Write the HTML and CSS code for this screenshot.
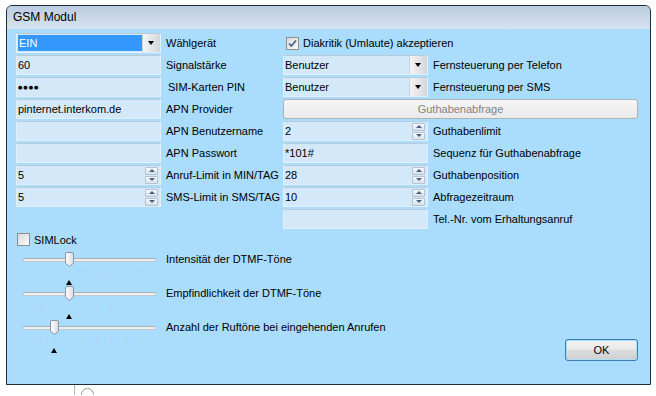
FILE: index.html
```html
<!DOCTYPE html>
<html lang="de">
<head>
  <meta charset="UTF-8">
  <title>GSM Modul</title>
  <link rel="stylesheet" href="styles.css">
</head>
<body>
  <div class="window">
    <div class="titlebar">GSM Modul</div>
    <div class="client">
      <div class="form">
        <!-- Zeile 1 -->
        <div class="combo"><span class="combo-text selected">EIN</span><span class="combo-btn"></span></div>
        <span class="lbl">Wählgerät</span>
        <label class="check wide">
          <span class="box"><svg width="11" height="11" viewBox="0 0 11 11"><path d="M2 5.5 L4.3 8 L9 2.5" fill="none" stroke="#4a6283" stroke-width="1.8"/></svg></span>
          Diakritik (Umlaute) akzeptieren
        </label>

        <div class="edit"><span class="val">60</span></div>
        <span class="lbl">Signalstärke</span>
        <div class="combo"><span class="combo-text">Benutzer</span><span class="combo-btn"></span></div>
        <span class="lbl">Fernsteuerung per Telefon</span>

        <div class="edit"><span class="val dots">●●●●</span></div>
        <span class="lbl indent">SIM-Karten PIN</span>
        <div class="combo"><span class="combo-text">Benutzer</span><span class="combo-btn"></span></div>
        <span class="lbl">Fernsteuerung per SMS</span>

        <div class="edit"><span class="val">pinternet.interkom.de</span></div>
        <span class="lbl">APN Provider</span>
        <button class="btn-disabled wide" disabled>Guthabenabfrage</button>

        <div class="edit"></div>
        <span class="lbl">APN Benutzername</span>
        <div class="edit"><span class="val">2</span><span class="spin"><span class="up"></span><span class="down"></span></span></div>
        <span class="lbl">Guthabenlimit</span>

        <div class="edit"></div>
        <span class="lbl">APN Passwort</span>
        <div class="edit"><span class="val">*101#</span></div>
        <span class="lbl">Sequenz für Guthabenabfrage</span>

        <div class="edit"><span class="val">5</span><span class="spin"><span class="up"></span><span class="down"></span></span></div>
        <span class="lbl">Anruf-Limit in MIN/TAG</span>
        <div class="edit"><span class="val">28</span><span class="spin"><span class="up"></span><span class="down"></span></span></div>
        <span class="lbl">Guthabenposition</span>

        <div class="edit"><span class="val">5</span><span class="spin"><span class="up"></span><span class="down"></span></span></div>
        <span class="lbl">SMS-Limit in SMS/TAG</span>
        <div class="edit"><span class="val">10</span><span class="spin"><span class="up"></span><span class="down"></span></span></div>
        <span class="lbl">Abfragezeitraum</span>

        <div class="edit col3"></div>
        <span class="lbl">Tel.-Nr. vom Erhaltungsanruf</span>
      </div>

      <label class="check simlock"><span class="box"></span>SIMLock</label>

      <div class="lower">
        <div class="sliders">
          <div class="slider-row">
            <div class="trackbar" style="--v: 3">
              <span class="track"></span>
              <span class="ticks"><i></i><i></i><i></i><i></i><i></i><i></i><i></i><i></i><i></i><i></i></span>
              <svg class="thumb" width="9" height="15" viewBox="0 0 9 15"><path d="M0.5 2 Q0.5 0.5 2 0.5 H7 Q8.5 0.5 8.5 2 V11 L4.5 14.5 L0.5 11 Z" fill="url(#tg)" stroke="#8a96a2"/><defs><linearGradient id="tg" x1="0" x2="1"><stop offset="0" stop-color="#ffffff"/><stop offset="1" stop-color="#d9dde2"/></linearGradient></defs></svg>
              <span class="marker"></span>
            </div>
            <span class="slider-lbl">Intensität der DTMF-Töne</span>
          </div>
          <div class="slider-row">
            <div class="trackbar" style="--v: 3">
              <span class="track"></span>
              <span class="ticks"><i></i><i></i><i></i><i></i><i></i><i></i><i></i><i></i><i></i><i></i></span>
              <svg class="thumb" width="9" height="15" viewBox="0 0 9 15"><path d="M0.5 2 Q0.5 0.5 2 0.5 H7 Q8.5 0.5 8.5 2 V11 L4.5 14.5 L0.5 11 Z" fill="url(#tg)" stroke="#8a96a2"/></svg>
              <span class="marker"></span>
            </div>
            <span class="slider-lbl">Empfindlichkeit der DTMF-Töne</span>
          </div>
          <div class="slider-row">
            <div class="trackbar" style="--v: 2">
              <span class="track"></span>
              <span class="ticks"><i></i><i></i><i></i><i></i><i></i><i></i><i></i><i></i><i></i><i></i></span>
              <svg class="thumb" width="9" height="15" viewBox="0 0 9 15"><path d="M0.5 2 Q0.5 0.5 2 0.5 H7 Q8.5 0.5 8.5 2 V11 L4.5 14.5 L0.5 11 Z" fill="url(#tg)" stroke="#8a96a2"/></svg>
              <span class="marker"></span>
            </div>
            <span class="slider-lbl">Anzahl der Ruftöne bei eingehenden Anrufen</span>
          </div>
        </div>
        <button class="btn-ok">OK</button>
      </div>
    </div>
  </div>
  <div class="behind"><span class="radio"></span></div>
</body>
</html>
```

FILE: styles.css
```css
body {
  margin: 0;
  background-color: #ffffff;
  font-family: "Liberation Sans", Arial, sans-serif;
  font-size: 11px;
  color: #000;
}
.window {
  margin: 5px 0 0 6px;
  width: 645px;
  box-sizing: border-box;
  border: 1px solid #1e2d3a;
  border-radius: 6px 6px 0 0;
  background-color: #aadcfd;
  overflow: hidden;
}
.titlebar {
  height: 23px;
  line-height: 23px;
  padding-left: 6px;
  font-size: 12px;
  background: linear-gradient(#bccde0, #d6e3f0);
}
.client {
  padding: 4px 12px 23px 9px;
}
.form {
  display: grid;
  grid-template-columns: 145px 112px 145px 205px;
  grid-auto-rows: 20px;
  column-gap: 5px;
  row-gap: 2px;
}
.lbl {
  display: flex;
  align-items: center;
  white-space: nowrap;
}
.lbl.indent {
  padding-left: 2px;
}
.wide {
  grid-column: 3 / span 2;
}
.col3 {
  grid-column: 3;
}

/* Eingabefelder */
.edit {
  display: flex;
  align-items: center;
  box-sizing: border-box;
  border: 1px solid #e2f0fb;
  border-top-color: #b9cad8;
  background-color: #d3e9fa;
}
.edit .val {
  flex: 1;
  padding-left: 1px;
}
.dots {
  font-family: "DejaVu Sans", sans-serif;
  font-size: 5px;
  letter-spacing: 1px;
}
.spin {
  display: flex;
  flex-direction: column;
  gap: 1px;
  width: 13px;
  margin-right: 2px;
}
.spin span {
  position: relative;
  height: 6px;
  border: 1px solid #b3c3d2;
  border-radius: 1px;
  background: linear-gradient(#f7f9fb, #d8e1e9);
}
.spin span:after {
  content: "";
  position: absolute;
  left: 3px;
  top: 1.5px;
  border-left: 3px solid transparent;
  border-right: 3px solid transparent;
}
.spin .up:after {
  border-bottom: 3px solid #4b5f7e;
}
.spin .down:after {
  border-top: 3px solid #4b5f7e;
}

/* Auswahllisten */
.combo {
  display: flex;
  box-sizing: border-box;
  border: 1px solid #e2f0fb;
  border-top-color: #b9cad8;
  background-color: #d3e9fa;
}
.combo-text {
  flex: 1;
  display: flex;
  align-items: center;
  padding-left: 1px;
}
.combo-text.selected {
  margin: 1px 0 1px 1px;
  background-color: #3399ff;
  color: #fff;
}
.combo-btn {
  position: relative;
  width: 17px;
  border-left: 1px solid #c9d3dc;
  background: linear-gradient(to right, #f4f4f4, #d4d7da);
}
.combo-btn:after {
  content: "";
  position: absolute;
  left: 5px;
  top: 7px;
  border-left: 3.5px solid transparent;
  border-right: 3.5px solid transparent;
  border-top: 4px solid #000;
}

/* Kontrollkästchen */
.check {
  display: flex;
  align-items: center;
  gap: 4px;
  padding-left: 3px;
}
.box {
  display: flex;
  align-items: center;
  justify-content: center;
  width: 13px;
  height: 13px;
  box-sizing: border-box;
  border: 1px solid #8e8f8f;
  background: linear-gradient(135deg, #d6d9dc, #fbfbfb);
}
.simlock {
  margin-top: 4px;
  padding-left: 1px;
  height: 13px;
}

/* Buttons */
.btn-disabled {
  font: inherit;
  color: #838383;
  border: 1px solid #adb2b5;
  border-radius: 3px;
  background: linear-gradient(#f6f6f6, #eaeaea);
}
.btn-ok {
  width: 73px;
  height: 22px;
  font: inherit;
  color: #000;
  border: 1px solid #3c7fb1;
  border-radius: 3px;
  background: linear-gradient(#f2f2f2 0%, #ebebeb 45%, #dddddd 50%, #cfcfcf 100%);
  box-shadow: inset 0 0 0 1px #a9dcf5;
}

/* Schieberegler */
.lower {
  display: flex;
  justify-content: space-between;
  align-items: flex-end;
  margin-top: 6px;
}
.sliders {
  padding-bottom: 7px;
}
.slider-row {
  display: grid;
  grid-template-columns: 145px auto;
  column-gap: 5px;
  height: 34px;
}
.trackbar {
  position: relative;
  height: 34px;
}
.track {
  position: absolute;
  left: 7px;
  top: 6px;
  width: 131px;
  height: 2px;
  border: 1px solid #c3c8cd;
  border-top-color: #a9b0b7;
  background-color: #eceeef;
}
.ticks {
  position: absolute;
  left: 10px;
  top: 19px;
  width: 129px;
  display: flex;
  justify-content: space-between;
}
.ticks i {
  width: 1px;
  height: 3px;
  background-color: #bfc8d0;
}
.thumb {
  position: absolute;
  top: 0;
  left: calc(10px + var(--v) * 14.2px - 4px);
}
.marker {
  position: absolute;
  top: 28px;
  left: calc(10px + var(--v) * 14.2px - 3px);
  border-left: 3.5px solid transparent;
  border-right: 3.5px solid transparent;
  border-bottom: 5px solid #000;
}
.slider-lbl {
  padding-top: 1px;
  white-space: nowrap;
}

/* Fenster dahinter */
.behind {
  margin-left: 74px;
  height: 10px;
  border-left: 1px solid #b8b8b8;
  overflow: hidden;
}
.radio {
  display: block;
  margin: 3px 0 0 6px;
  width: 11px;
  height: 11px;
  border: 1px solid #9a9a9a;
  border-radius: 50%;
}
```
